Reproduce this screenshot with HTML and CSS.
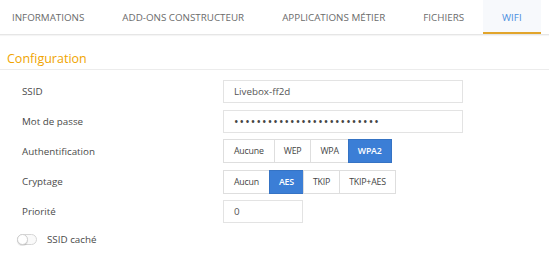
FILE: index.html
```html
<!DOCTYPE html>
<html lang="fr">
  <head>
    <meta charset="UTF-8" />
    <title>WiFi</title>
    <link rel="stylesheet" href="styles.css">
  </head>
  <body>
    <div class="tabs">
      <div class="tab">Informations</div>
      <div class="tab">Add-ons constructeur</div>
      <div class="tab">Applications métier</div>
      <div class="tab">Fichiers</div>
      <div class="tab active">Wifi</div>
    </div>

    <div class="section-title">Configuration</div>

    <div class="form">
      <div class="label">SSID</div>
      <div class="field wide">Livebox-ff2d</div>

      <div class="label">Mot de passe</div>
      <div class="field wide dots">••••••••••••••••••••••••••</div>

      <div class="label">Authentification</div>
      <div class="btn-group">
        <div class="btn">Aucune</div>
        <div class="btn">WEP</div>
        <div class="btn">WPA</div>
        <div class="btn selected">WPA2</div>
      </div>

      <div class="label">Cryptage</div>
      <div class="btn-group">
        <div class="btn">Aucun</div>
        <div class="btn selected">AES</div>
        <div class="btn">TKIP</div>
        <div class="btn">TKIP+AES</div>
      </div>

      <div class="label">Priorité</div>
      <div class="field short">0</div>
    </div>

    <div class="switch-row">
      <span class="switch"><span class="knob"></span></span>
      <span class="switch-label">SSID caché</span>
    </div>
  </body>
</html>
```

FILE: styles.css
```css
body {
  margin: 0;
  background: #fff;
  font-family: "Open Sans", "Noto Sans", sans-serif;
  color: #4a4a4a;
}

.tabs {
  display: flex;
  height: 34px;
  border-bottom: 1px solid #e6e6e6;
  box-shadow: 0 1px 1px rgba(0, 0, 0, 0.04);
}

.tab {
  display: flex;
  align-items: center;
  padding: 0 19px;
  font-size: 9.8px;
  white-space: nowrap;
  text-transform: uppercase;
  color: #6b6b6b;
  box-sizing: border-box;
}

.tab:first-child {
  padding-left: 12px;
}

.tab.active {
  color: #4a8fe0;
  background: #f7f9fc;
  border-bottom: 2px solid #e2a52b;
  padding-top: 2px;
}

.section-title {
  margin-top: 14px;
  padding-left: 7px;
  height: 20px;
  line-height: 20px;
  font-size: 12.5px;
  color: #f0a400;
  border-bottom: 1px solid #ececec;
}

.form {
  display: grid;
  grid-template-columns: 201px 240px;
  row-gap: 6.5px;
  align-items: center;
  padding: 10px 0 0 22px;
}

.label {
  font-size: 9.8px;
  color: #4a4a4a;
}

.field {
  height: 23px;
  box-sizing: border-box;
  border: 1px solid #e3e3e3;
  padding: 0 10px;
  display: flex;
  align-items: center;
  font-size: 9.8px;
  color: #555;
}

.field.short {
  width: 80px;
}

.field.dots {
  font-size: 12px;
  letter-spacing: 1.1px;
  color: #444;
}

.btn-group {
  display: flex;
  justify-self: start;
  height: 24px;
}

.btn {
  display: flex;
  align-items: center;
  padding: 0 9px;
  border: 1px solid #dedede;
  margin-left: -1px;
  font-size: 8.8px;
  letter-spacing: -0.2px;
  color: #444;
  background: #fff;
}

.btn:first-child {
  margin-left: 0;
  padding: 0 10px;
}

.btn.selected {
  background: #3b7ed6;
  border-color: #3573c4;
  color: #fff;
  font-weight: 600;
}

.switch-row {
  display: flex;
  align-items: center;
  margin-top: 10px;
  padding-left: 17px;
}

.switch {
  position: relative;
  display: inline-block;
  width: 20px;
  height: 11px;
  box-sizing: border-box;
  border: 1px solid #d6d6d6;
  border-radius: 6px;
  background: #fafafa;
}

.knob {
  position: absolute;
  left: -1px;
  top: -1px;
  width: 11px;
  height: 11px;
  box-sizing: border-box;
  border-radius: 50%;
  background: #fff;
  border: 1px solid #cfcfcf;
  box-shadow: 0 1px 1px rgba(0, 0, 0, 0.12);
}

.switch-label {
  margin-left: 10px;
  font-size: 9.8px;
  color: #4a4a4a;
}
```
